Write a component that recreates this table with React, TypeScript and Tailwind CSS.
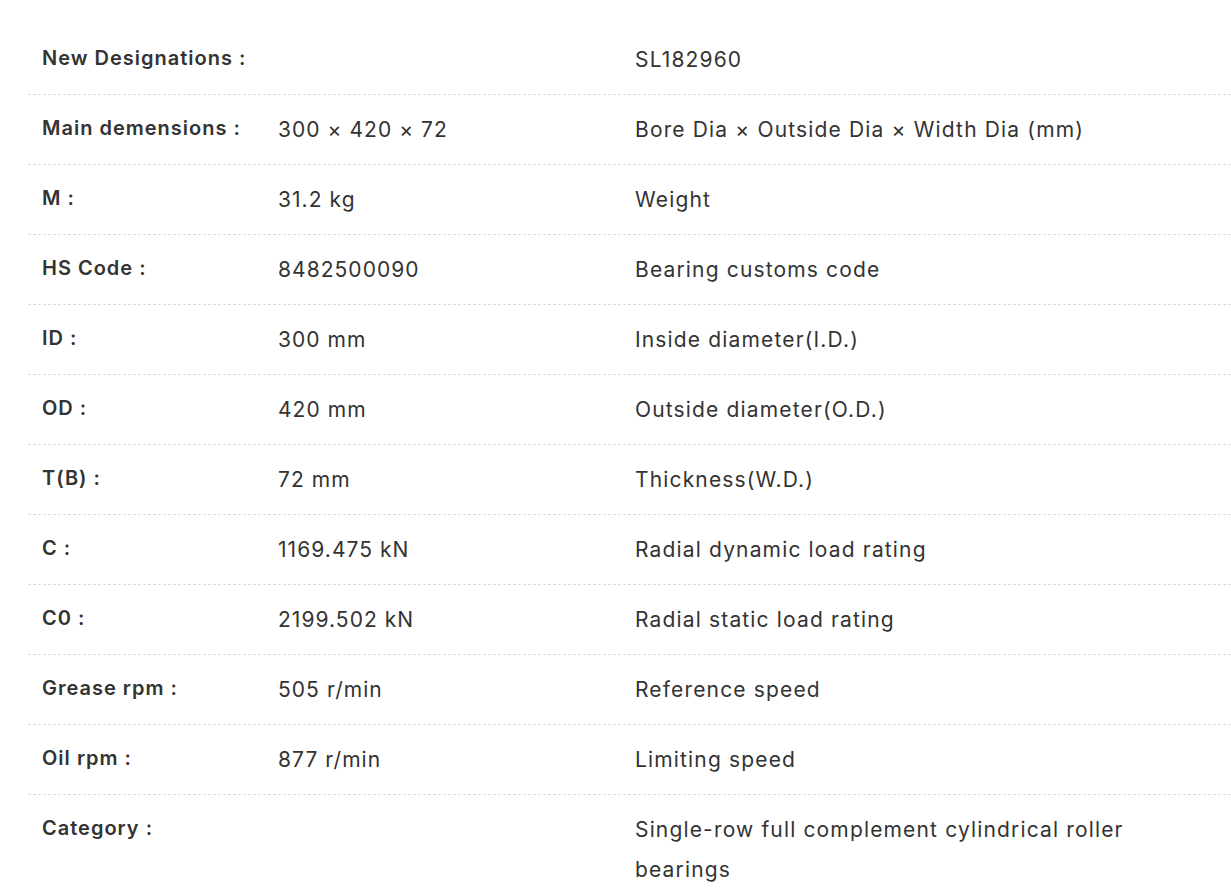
const rows: [string, string, string][] = [
  ["New Designations :", "", "SL182960"],
  ["Main demensions :", "300 × 420 × 72", "Bore Dia × Outside Dia × Width Dia (mm)"],
  ["M :", "31.2 kg", "Weight"],
  ["HS Code :", "8482500090", "Bearing customs code"],
  ["ID :", "300 mm", "Inside diameter(I.D.)"],
  ["OD :", "420 mm", "Outside diameter(O.D.)"],
  ["T(B) :", "72 mm", "Thickness(W.D.)"],
  ["C :", "1169.475 kN", "Radial dynamic load rating"],
  ["C0 :", "2199.502 kN", "Radial static load rating"],
  ["Grease rpm :", "505 r/min", "Reference speed"],
  ["Oil rpm :", "877 r/min", "Limiting speed"],
  ["Category :", "", "Single-row full complement cylindrical roller bearings"],
];

export default function App() {
  return (
    <div className="min-h-screen bg-white pl-[28px] pt-[25px] font-['Inter',sans-serif] text-[#333]">
      <div className="w-[1203px]">
        {rows.map(([label, value, desc], i) => (
          <div
            key={label}
            className={
              "grid grid-cols-[250px_357px_1fr] pt-[15px] " +
              (i < rows.length - 1 ? "pb-[14px] border-b border-dashed border-[#dddddd]" : "pb-[15px]")
            }
          >
            <div className="pl-[14px] text-[20px] font-semibold leading-[36px] tracking-[0.05em]">{label}</div>
            <div className="text-[21px] leading-[40px] tracking-[0.05em]">{value}</div>
            <div className="max-w-[570px] text-[21px] leading-[40px] tracking-[0.055em]">{desc}</div>
          </div>
        ))}
      </div>
    </div>
  );
}
